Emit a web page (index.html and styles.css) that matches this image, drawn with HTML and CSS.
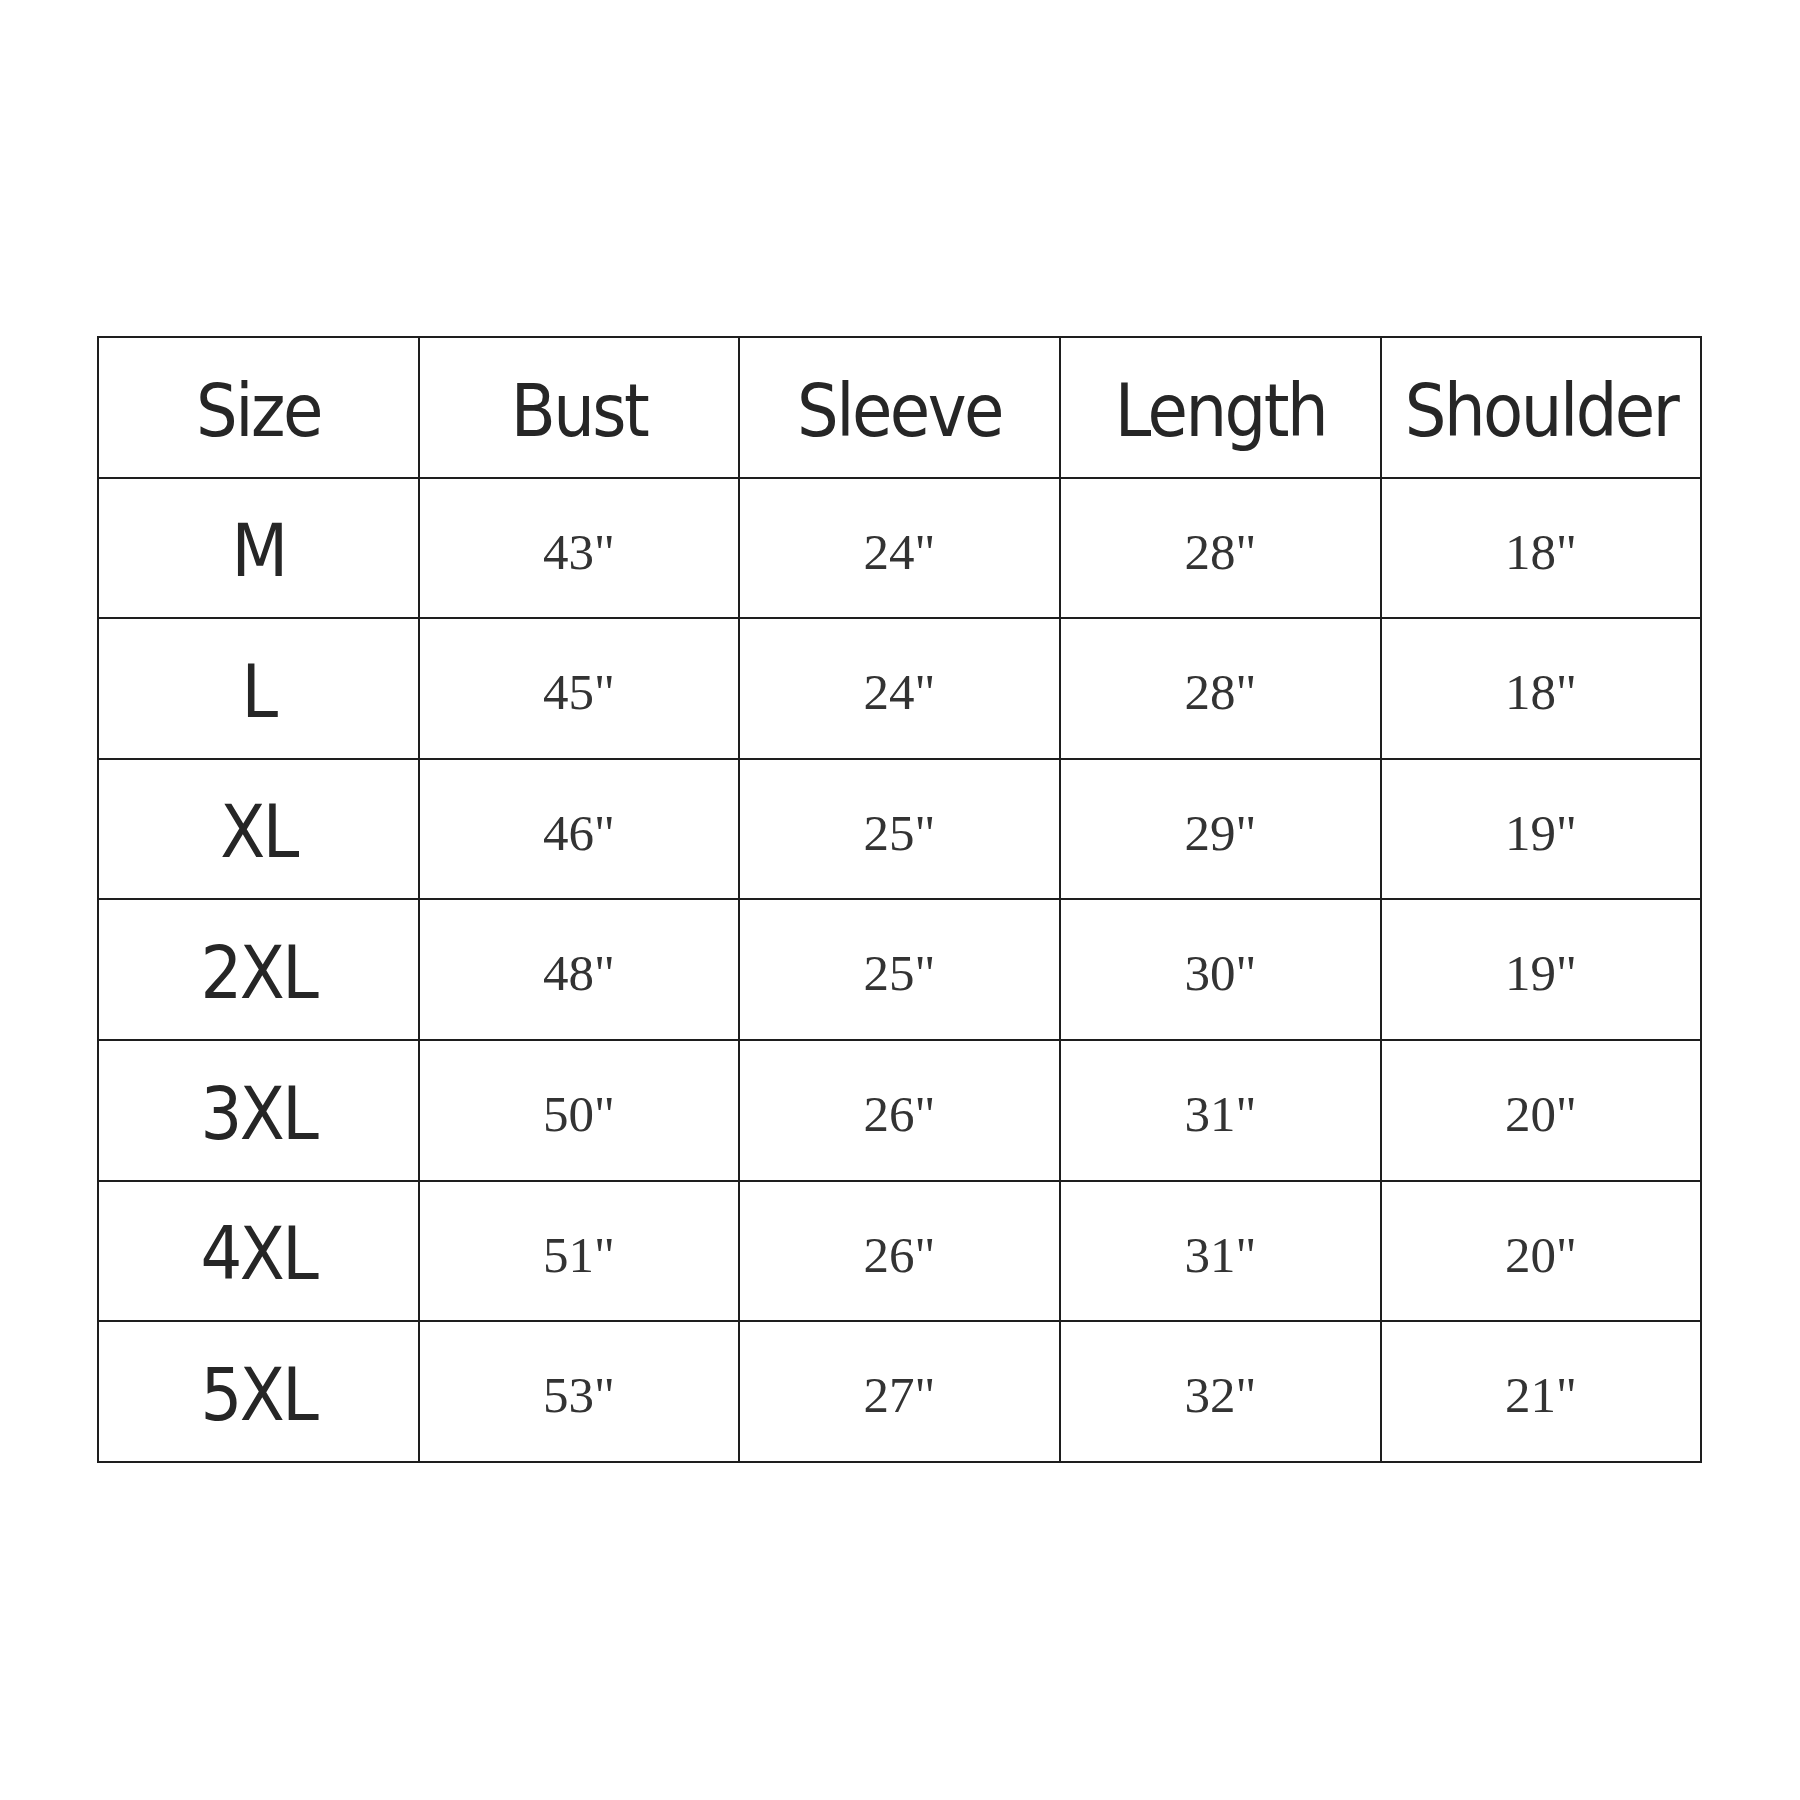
FILE: index.html
```html
<!DOCTYPE html>
<html>
<head>
<meta charset="utf-8">
<link rel="stylesheet" href="styles.css">
</head>
<body>
<div class="chart">
  <div class="cell head">Size</div><div class="cell head">Bust</div><div class="cell head">Sleeve</div><div class="cell head">Length</div><div class="cell head">Shoulder</div>
  <div class="cell size">M</div><div class="cell num">43"</div><div class="cell num">24"</div><div class="cell num">28"</div><div class="cell num">18"</div>
  <div class="cell size">L</div><div class="cell num">45"</div><div class="cell num">24"</div><div class="cell num">28"</div><div class="cell num">18"</div>
  <div class="cell size">XL</div><div class="cell num">46"</div><div class="cell num">25"</div><div class="cell num">29"</div><div class="cell num">19"</div>
  <div class="cell size">2XL</div><div class="cell num">48"</div><div class="cell num">25"</div><div class="cell num">30"</div><div class="cell num">19"</div>
  <div class="cell size">3XL</div><div class="cell num">50"</div><div class="cell num">26"</div><div class="cell num">31"</div><div class="cell num">20"</div>
  <div class="cell size">4XL</div><div class="cell num">51"</div><div class="cell num">26"</div><div class="cell num">31"</div><div class="cell num">20"</div>
  <div class="cell size">5XL</div><div class="cell num">53"</div><div class="cell num">27"</div><div class="cell num">32"</div><div class="cell num">21"</div>
</div>
</body>
</html>
```
FILE: styles.css
```css
html, body {
  margin: 0;
  background: #fff;
}
.chart {
  margin: 336px 0 0 97px;
  display: grid;
  grid-template-columns: 321px 320px 321px 321px 320px;
  grid-template-rows: 141px 140px 141px 140px 141px 141px 140px 141px;
  border-top: 2px solid #1e1e1e;
  border-left: 2px solid #1e1e1e;
  width: max-content;
}
.cell {
  border-right: 2px solid #1e1e1e;
  border-bottom: 2px solid #1e1e1e;
  display: flex;
  align-items: center;
  justify-content: center;
}
.head, .size {
  font-family: "DejaVu Sans Condensed", "DejaVu Sans", sans-serif;
  font-size: 73px;
  letter-spacing: -2.5px;
  color: #262626;
  padding-top: 5px;
}
.num {
  font-family: "Liberation Serif", serif;
  font-size: 51px;
  color: #333;
  padding-top: 7px;
}
```
